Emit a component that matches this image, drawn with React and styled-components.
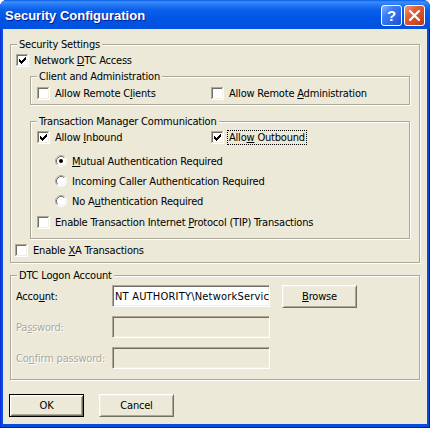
import React from 'react'
import styled, { createGlobalStyle } from 'styled-components'

const GlobalStyle = createGlobalStyle`
  html, body {
    margin: 0;
    padding: 0;
    background: #fff;
  }
  body {
    font-family: "DejaVu Sans Condensed", "Liberation Sans", sans-serif;
    font-size: 11px;
    letter-spacing: -0.2px;
    color: #000;
  }
`

const Window = styled.div`
  width: 430px;
  height: 428px;
  display: flex;
  flex-direction: column;
  background: #0A4BDB;
  border-radius: 7px 7px 0 0;
  box-shadow: inset -1px -1px 0 #001A9E, inset 1px 0 0 #0831D9;
  overflow: hidden;
`

const TitleBar = styled.div`
  flex: none;
  height: 29px;
  display: flex;
  align-items: flex-start;
  padding: 0 5px 0 5px;
  background: linear-gradient(
    to bottom,
    #0A5CE6 0px,
    #3D90FA 2px,
    #2277F4 5px,
    #0A5FEB 10px,
    #0055E5 18px,
    #0052DE 29px
  );
`

const Title = styled.div`
  flex: 1;
  margin-top: 8px;
  font-family: "Liberation Sans", Arial, sans-serif;
  font-weight: bold;
  font-size: 13px;
  letter-spacing: 0;
  color: #fff;
  text-shadow: 1px 1px 0 #0A1E8C;
`

const Caps = styled.div`
  display: flex;
  gap: 2px;
  margin-top: 5px;
`

const CapButton = styled.div`
  box-sizing: border-box;
  width: 21px;
  height: 21px;
  border: 1px solid #fff;
  border-radius: 3px;
  display: flex;
  align-items: center;
  justify-content: center;
  color: #fff;
  font-family: "Liberation Sans", Arial, sans-serif;
  font-weight: bold;
  font-size: 15px;
  letter-spacing: 0;
  background: ${({ $kind }) =>
    $kind === 'close'
      ? 'linear-gradient(135deg, #F29A7E 0%, #E35D37 35%, #D24A22 70%, #B8380F 100%)'
      : 'linear-gradient(135deg, #8AB2FB 0%, #3B7BF2 35%, #2A66E6 70%, #1A4FCB 100%)'};
`

const Client = styled.div`
  flex: 1;
  margin: 0 3px 4px 3px;
  background: #ECE9D8;
  display: flex;
  flex-direction: column;
  align-items: flex-start;
`

const Group = styled.div`
  box-sizing: border-box;
  flex: none;
  width: ${({ $w }) => $w}px;
  height: ${({ $h }) => $h}px;
  margin: ${({ $mt }) => $mt}px 0 0 ${({ $ml }) => $ml}px;
  border: 1px solid #ACA899;
  box-shadow: inset 1px 1px 0 #fff, 1px 1px 0 #fff;
  display: flex;
  flex-direction: column;
  align-items: flex-start;
`

const Caption = styled.div`
  height: 13px;
  line-height: 13px;
  margin: -7px 0 0 6px;
  padding: 0 2px;
  background: #ECE9D8;
  white-space: nowrap;
`

const Row = styled.div`
  display: flex;
  align-items: center;
  gap: 5px;
  height: ${({ $h }) => $h || 13}px;
  margin: ${({ $mt }) => $mt || 0}px 0 0 ${({ $ml }) => $ml || 0}px;
  white-space: nowrap;
`

const Pair = styled.div`
  display: grid;
  grid-template-columns: 174px auto;
  align-items: center;
  height: 13px;
  margin: ${({ $mt }) => $mt}px 0 0 ${({ $ml }) => $ml}px;
`

const Label = styled.span`
  line-height: 13px;
  outline: ${({ $focused }) => ($focused ? '1px dotted #000' : 'none')};
  outline-offset: 0;
  padding: 0 ${({ $focused }) => ($focused ? '1px' : '0')};
  margin-left: ${({ $focused }) => ($focused ? '-1px' : '0')};
`

const Key = styled.u`
  text-decoration: underline;
  text-underline-offset: 1px;
`

const BoxIcon = styled.svg`
  flex: none;
  display: block;
  shape-rendering: crispEdges;
`

const Radios = styled.div`
  display: flex;
  flex-direction: column;
  margin: ${({ $mt }) => $mt}px 0 0 ${({ $ml }) => $ml}px;
`

const Form = styled.div`
  display: grid;
  grid-template-columns: 96px 170px 75px;
  grid-auto-rows: 23px;
  row-gap: 8px;
  margin: 3px 0 0 5px;
  align-items: center;
`

const FieldLabel = styled.span`
  white-space: nowrap;
  color: ${({ $disabled }) => ($disabled ? '#ACA899' : '#000')};
  text-shadow: ${({ $disabled }) => ($disabled ? '1px 1px 0 #fff' : 'none')};
`

const TextBox = styled.input`
  box-sizing: border-box;
  align-self: start;
  width: 158px;
  height: 22px;
  margin: 0;
  padding: 0 0 0 2px;
  font: inherit;
  letter-spacing: 0.2px;
  color: #000;
  background: ${({ disabled }) => (disabled ? '#ECE9D8' : '#fff')};
  border: 1px solid;
  border-color: #ACA899 #fff #fff #ACA899;
  box-shadow: inset 1px 1px 0 #716F64, inset -1px -1px 0 #F1EFE2;
  outline: none;
`

const PushButton = styled.button`
  box-sizing: border-box;
  width: 75px;
  height: 23px;
  margin: 0;
  padding: 0;
  font: inherit;
  letter-spacing: inherit;
  color: #000;
  background: #ECE9D8;
  border: 1px solid;
  border-color: ${({ $default }) =>
    $default ? '#000' : '#fff #716F64 #716F64 #fff'};
  box-shadow: ${({ $default }) =>
    $default
      ? 'inset 1px 1px 0 #fff, inset -1px -1px 0 #716F64, inset 2px 2px 0 #F1EFE2, inset -2px -2px 0 #ACA899'
      : 'inset 1px 1px 0 #F1EFE2, inset -1px -1px 0 #ACA899'};
`

const ButtonBar = styled.div`
  display: flex;
  gap: 15px;
  margin: 14px 0 0 6px;
`

const CheckBox = ({ checked }) => (
  <BoxIcon width="13" height="13" viewBox="0 0 13 13">
    <rect width="13" height="13" fill="#fff" />
    <path d="M0 0h12v1H1v11H0z" fill="#ACA899" />
    <path d="M1 1h10v1H2v9H1z" fill="#716F64" />
    <path d="M11 1h1v11H1v-1h10z" fill="#F1EFE2" />
    {checked && (
      <path
        d="M3 5h1v3H3zM4 6h1v3H4zM5 7h1v3H5zM6 6h1v3H6zM7 5h1v3H7zM8 4h1v3H8zM9 3h1v3H9z"
        fill="#000"
      />
    )}
  </BoxIcon>
)

const Radio = ({ checked }) => (
  <svg width="12" height="12" viewBox="0 0 12 12" style={{ flex: 'none', display: 'block' }}>
    <circle cx="6" cy="6" r="5.5" fill="#fff" />
    <path d="M2.11 9.89A5.5 5.5 0 0 1 9.89 2.11" fill="none" stroke="#ACA899" />
    <path d="M9.89 2.11A5.5 5.5 0 0 1 2.11 9.89" fill="none" stroke="#fff" />
    <path d="M2.82 9.18A4.5 4.5 0 0 1 9.18 2.82" fill="none" stroke="#716F64" />
    <path d="M9.18 2.82A4.5 4.5 0 0 1 2.82 9.18" fill="none" stroke="#F1EFE2" />
    {checked && <circle cx="6" cy="6" r="2" fill="#000" />}
  </svg>
)

const Check = ({ checked, focused, children }) => (
  <Row as="label">
    <CheckBox checked={checked} />
    <Label $focused={focused}>{children}</Label>
  </Row>
)

export default function App() {
  return (
    <>
      <GlobalStyle />
      <Window>
        <TitleBar>
          <Title>Security Configuration</Title>
          <Caps>
            <CapButton $kind="help">?</CapButton>
            <CapButton $kind="close">
              <svg width="11" height="11" viewBox="0 0 11 11">
                <path d="M1 1L10 10M10 1L1 10" stroke="#fff" strokeWidth="2.2" strokeLinecap="square" />
              </svg>
            </CapButton>
          </Caps>
        </TitleBar>

        <Client>
          <Group $w={410} $h={219} $mt={15} $ml={7}>
            <Caption>Security Settings</Caption>
            <Row $mt={3} $ml={5}>
              <CheckBox checked />
              <Label>Network <Key>D</Key>TC Access</Label>
            </Row>

            <Group $w={380} $h={29} $mt={9} $ml={19}>
              <Caption>Client and Administration</Caption>
              <Pair $mt={4} $ml={6}>
                <Check>Allow Remote C<Key>l</Key>ients</Check>
                <Check>Allow Remote <Key>A</Key>dministration</Check>
              </Pair>
            </Group>

            <Group $w={380} $h={118} $mt={16} $ml={19}>
              <Caption>Transaction Manager Communication</Caption>
              <Pair $mt={3} $ml={6}>
                <Check checked>Allow <Key>I</Key>nbound</Check>
                <Check checked focused>Allo<Key>w</Key> Outbound</Check>
              </Pair>
              <Radios $mt={7} $ml={24}>
                <Row $h={20}>
                  <Radio checked />
                  <Label><Key>M</Key>utual Authentication Required</Label>
                </Row>
                <Row $h={20}>
                  <Radio />
                  <Label>Incoming Caller Authentication Required</Label>
                </Row>
                <Row $h={20}>
                  <Radio />
                  <Label>No A<Key>u</Key>thentication Required</Label>
                </Row>
              </Radios>
              <Row $mt={5} $ml={6}>
                <CheckBox />
                <Label>Enable Transaction Internet <Key>P</Key>rotocol (TIP) Transactions</Label>
              </Row>
            </Group>

            <Row $mt={5} $ml={4}>
              <CheckBox />
              <Label>Enable <Key>X</Key>A Transactions</Label>
            </Row>
          </Group>

          <Group $w={410} $h={105} $mt={12} $ml={7}>
            <Caption>DTC Logon Account</Caption>
            <Form>
              <FieldLabel>Acco<Key>u</Key>nt:</FieldLabel>
              <TextBox readOnly value={'NT AUTHORITY\\NetworkService'} />
              <PushButton><Key>B</Key>rowse</PushButton>

              <FieldLabel $disabled>Pa<Key>s</Key>sword:</FieldLabel>
              <TextBox disabled type="text" value="" readOnly />
              <span />

              <FieldLabel $disabled>Co<Key>n</Key>firm password:</FieldLabel>
              <TextBox disabled type="text" value="" readOnly />
              <span />
            </Form>
          </Group>

          <ButtonBar>
            <PushButton $default>OK</PushButton>
            <PushButton>Cancel</PushButton>
          </ButtonBar>
        </Client>
      </Window>
    </>
  )
}
